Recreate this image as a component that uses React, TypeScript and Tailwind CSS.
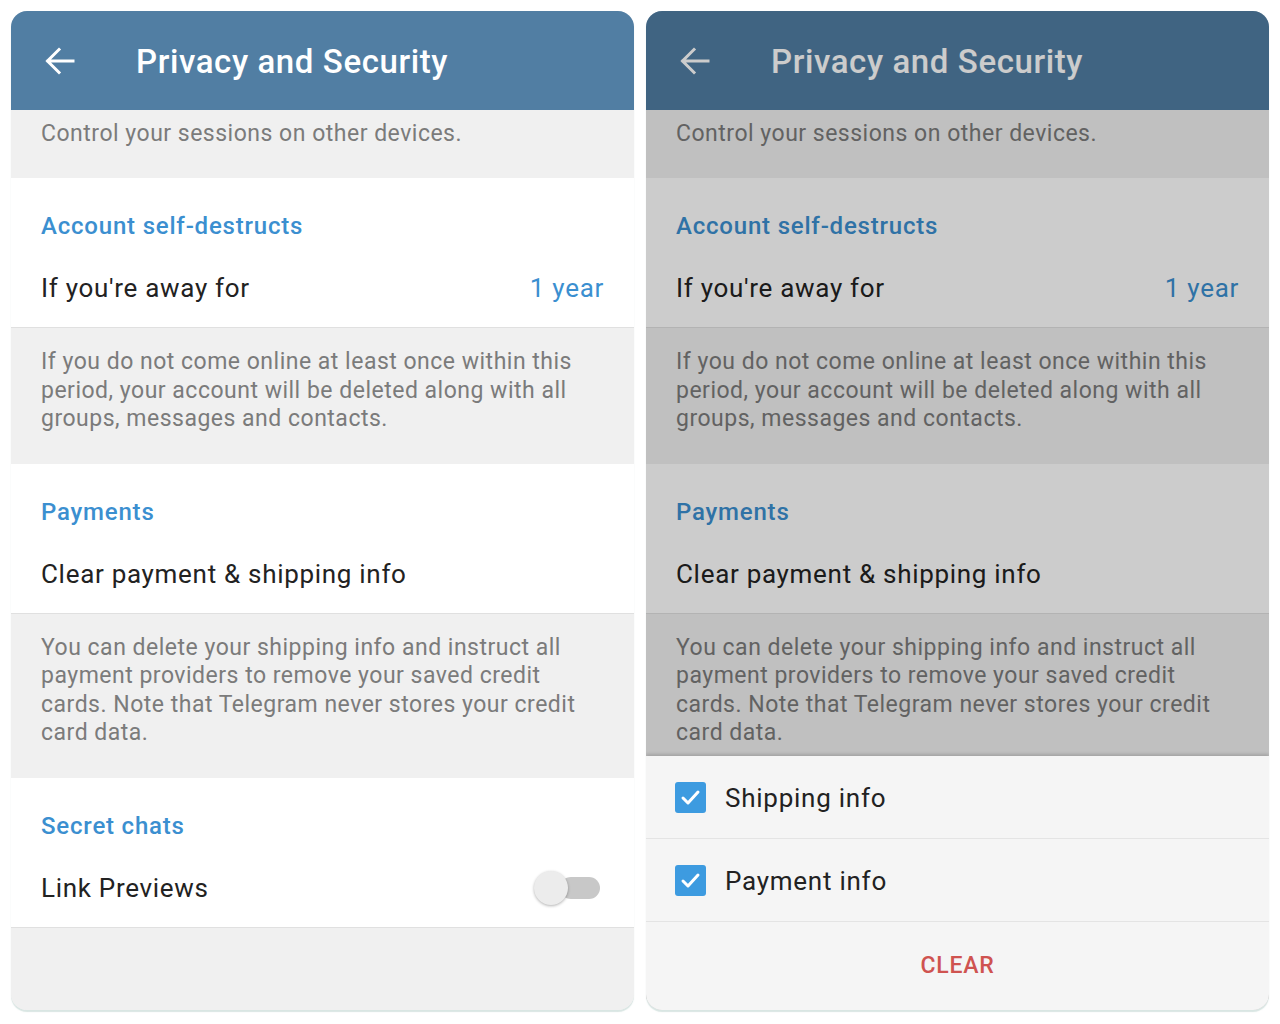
import React from 'react';

const font = { fontFamily: 'Roboto, "Noto Sans", sans-serif' };

const BackArrow: React.FC<{ className?: string }> = ({ className }) => (
  <svg className={className} width="30" height="28" viewBox="0 0 30 28" fill="none">
    <path d="M28 14H3M14 2.5L2.5 14L14 25.5" stroke="currentColor" strokeWidth="3" strokeLinecap="square" />
  </svg>
);

const Header = () => (
  <div className="h-[99px] shrink-0 bg-[#517ea3] flex items-center pl-[34px] text-white">
    <BackArrow />
    <span className="ml-[61px] mt-[2px] text-[33px] font-medium tracking-[0.6px]">Privacy and Security</span>
  </div>
);

const SectionTitle: React.FC<{ children: React.ReactNode }> = ({ children }) => (
  <div className="pt-[34px] px-[30px] text-[24px] leading-[28px] font-medium tracking-[0.8px] text-[#3b8fd0]">
    {children}
  </div>
);

const Row: React.FC<{ label: string; right?: React.ReactNode }> = ({ label, right }) => (
  <div className="pt-[34px] pb-[25px] px-[30px] flex items-center justify-between text-[26px] leading-[28px] tracking-[0.7px] text-[#222]">
    <span>{label}</span>
    {right}
  </div>
);

const Note: React.FC<{ children: React.ReactNode }> = ({ children }) => (
  <div className="bg-[#f0f0f0] border-t border-[#e0e0e0] px-[30px] pt-[20px] pb-[30px] text-[23px] leading-[28.5px] tracking-[0.5px] text-[#7b7b7b]">
    {children}
  </div>
);

const Toggle = () => (
  <div className="h-[28px] flex items-center mr-[4px]">
    <div className="relative w-[66px] h-[34px]">
      <div className="absolute right-0 top-[6px] w-[40px] h-[22px] rounded-full bg-[#c8c8c8]" />
      <div className="absolute left-0 top-0 w-[34px] h-[34px] rounded-full bg-[#ececec] shadow-[0_1px_3px_rgba(0,0,0,0.3)]" />
    </div>
  </div>
);

const Settings = () => (
  <div className="flex flex-col flex-1">
    <div className="bg-[#f0f0f0] px-[30px] pt-[10px] pb-[30px] text-[23px] leading-[28px] tracking-[0.5px] text-[#7b7b7b]">
      Control your sessions on other devices.
    </div>
    <div className="bg-white">
      <SectionTitle>Account self-destructs</SectionTitle>
      <Row label="If you're away for" right={<span className="text-[#3b8fd0]">1 year</span>} />
    </div>
    <Note>
      If you do not come online at least once within this period, your account will be deleted along with all
      groups, messages and contacts.
    </Note>
    <div className="bg-white">
      <SectionTitle>Payments</SectionTitle>
      <Row label="Clear payment & shipping info" />
    </div>
    <Note>
      You can delete your shipping info and instruct all payment providers to remove your saved credit cards. Note
      that Telegram never stores your credit card data.
    </Note>
    <div className="bg-white">
      <SectionTitle>Secret chats</SectionTitle>
      <Row label="Link Previews" right={<Toggle />} />
    </div>
    <div className="flex-1 bg-[#f0f0f0] border-t border-[#e0e0e0]" />
  </div>
);

const Checkbox = () => (
  <div className="w-[31px] h-[31px] shrink-0 rounded-[3px] bg-[#3d9be0] flex items-center justify-center">
    <svg width="21" height="21" viewBox="0 0 21 21" fill="none">
      <path d="M3 11L8 16L18 5" stroke="white" strokeWidth="3" strokeLinecap="round" strokeLinejoin="round" />
    </svg>
  </div>
);

const CheckRow: React.FC<{ label: string }> = ({ label }) => (
  <div className="h-[83px] flex items-center px-[29px] gap-[19px] border-b border-[#e4e4e4] text-[26px] tracking-[0.75px] text-[#222]">
    <Checkbox />
    <span className="mt-[3px]">{label}</span>
  </div>
);

const Panel: React.FC<{ children?: React.ReactNode }> = ({ children }) => (
  <div className="relative w-[623px] h-[999px] rounded-[16px] overflow-hidden flex flex-col bg-[#f0f0f0] shadow-[0_2px_1px_rgba(180,205,200,0.5)]">
    <Header />
    <Settings />
    {children}
  </div>
);

export default function App() {
  return (
    <div className="w-[1280px] h-[1024px] bg-white flex gap-[12px] pl-[11px] pt-[11px]" style={font}>
      <Panel />
      <Panel>
        <div className="absolute inset-0 bg-black/20" />
        <div className="absolute left-0 right-0 bottom-0 h-[254px] bg-[#f5f5f5] flex flex-col shadow-[0_-2px_3px_rgba(0,0,0,0.15)]">
          <CheckRow label="Shipping info" />
          <CheckRow label="Payment info" />
          <div className="flex-1 flex items-center justify-center text-[23px] font-medium tracking-[0.8px] text-[#cf5350]">
            CLEAR
          </div>
        </div>
      </Panel>
    </div>
  );
}
